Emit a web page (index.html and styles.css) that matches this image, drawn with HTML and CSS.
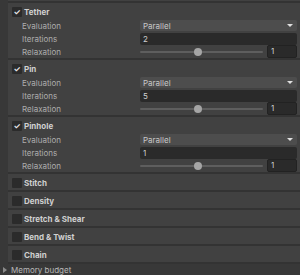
FILE: index.html
```html
<!DOCTYPE html>
<html lang="en">
<head>
    <meta charset="UTF-8">
    <meta name="viewport" content="width=device-width, initial-scale=1.0">
    <title>Constraints</title>
    <link rel="stylesheet" href="styles.css">
</head>
<body>

    <div class="panel">
        <div class="top-edge"></div>

        <div class="section">
            <div class="header"><span class="check on">&#10003;</span><span class="title">Tether</span></div>
            <div class="row"><span class="label">Evaluation</span><div class="dropdown">Parallel<span class="arrow"></span></div></div>
            <div class="row"><span class="label">Iterations</span><div class="field">2</div></div>
            <div class="row"><span class="label">Relaxation</span><div class="slider"><div class="track"><span class="thumb"></span></div><div class="field num">1</div></div></div>
        </div>

        <div class="section">
            <div class="header"><span class="check on">&#10003;</span><span class="title">Pin</span></div>
            <div class="row"><span class="label">Evaluation</span><div class="dropdown">Parallel<span class="arrow"></span></div></div>
            <div class="row"><span class="label">Iterations</span><div class="field">5</div></div>
            <div class="row"><span class="label">Relaxation</span><div class="slider"><div class="track"><span class="thumb"></span></div><div class="field num">1</div></div></div>
        </div>

        <div class="section">
            <div class="header"><span class="check on">&#10003;</span><span class="title">Pinhole</span></div>
            <div class="row"><span class="label">Evaluation</span><div class="dropdown">Parallel<span class="arrow"></span></div></div>
            <div class="row"><span class="label">Iterations</span><div class="field">1</div></div>
            <div class="row"><span class="label">Relaxation</span><div class="slider"><div class="track"><span class="thumb"></span></div><div class="field num">1</div></div></div>
        </div>

        <div class="section"><div class="header"><span class="check"></span><span class="title">Stitch</span></div></div>
        <div class="section"><div class="header"><span class="check"></span><span class="title">Density</span></div></div>
        <div class="section"><div class="header"><span class="check"></span><span class="title">Stretch &amp; Shear</span></div></div>
        <div class="section"><div class="header"><span class="check"></span><span class="title">Bend &amp; Twist</span></div></div>
        <div class="section"><div class="header"><span class="check"></span><span class="title">Chain</span></div></div>
    </div>

    <div class="foldout"><span class="tri"></span>Memory budget</div>

</body>
</html>
```

FILE: styles.css
```css
body { margin: 0; background-color: #383838; font-family: Inter, "Noto Sans", sans-serif; font-size: 8px; color: #adadad; }
.panel { margin-left: 8px; background-color: #414141; }
.top-edge { height: 1px; border-bottom: 2px solid #333333; }
.section { padding: 2px 3px 0 4px; border-bottom: 2px solid #333333; }
.header { height: 14px; display: flex; align-items: center; gap: 2px; }
.check { width: 10px; height: 10px; background-color: #2b2b2b; border-radius: 1px; color: #e6e6e6; font-size: 8px; line-height: 10px; text-align: center; font-weight: bold; }
.title { font-weight: bold; color: #d0d0d0; }
.row { height: 13px; display: grid; grid-template-columns: 118px 1fr; align-items: center; padding-left: 10px; }
.dropdown { height: 11px; background-color: #4d4d4d; border-radius: 2px; color: #c8c8c8; padding-left: 3px; display: flex; align-items: center; justify-content: space-between; }
.arrow { width: 0; height: 0; border-left: 3px solid transparent; border-right: 3px solid transparent; border-top: 3px solid #e0e0e0; margin-right: 4px; }
.field { height: 12px; background-color: #2a2a2a; border-radius: 2px; color: #d0d0d0; padding-left: 3px; line-height: 12px; }
.slider { display: grid; grid-template-columns: 1fr 30px; gap: 4px; align-items: center; }
.track { height: 2px; background-color: #5e5e5e; border-radius: 1px; position: relative; }
.thumb { position: absolute; left: 47%; top: -3px; width: 8px; height: 8px; margin-left: -4px; border-radius: 50%; background-color: #a5a5a5; }
.num { border: 1px solid #222; height: 11px; line-height: 11px; }
.foldout { height: 12px; display: flex; align-items: center; padding-left: 3px; gap: 2px; color: #b8b8b8; background-color: #383838; }
.tri { width: 0; height: 0; border-top: 3px solid transparent; border-bottom: 3px solid transparent; border-left: 4px solid #8a8a8a; margin-right: 2px; }
```
